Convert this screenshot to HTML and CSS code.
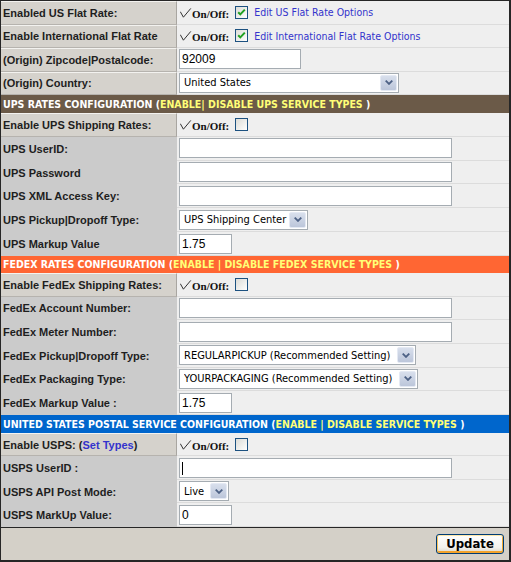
FILE: index.html
```html
<!DOCTYPE html>
<html>
<head>
<meta charset="utf-8">
<title>Shipping Configuration</title>
<link rel="stylesheet" href="styles.css">
</head>
<body>
<div class="panel">
  <div class="form">
    <div class="lbl raised">Enabled US Flat Rate:</div>
    <div class="val">
      <span class="tick"><svg width="12" height="10" viewBox="0 0 12 10"><polyline points="0.3,3.7 3.4,9.2 10.8,0.4" fill="none" stroke="#333" stroke-width="1"/></svg></span><span class="onoff">On/Off:</span>
      <span class="cb"><svg width="11" height="11" viewBox="0 0 11 11"><path d="M2.2 5.2 L4.3 7.4 L8.8 2.6" fill="none" stroke="#21a121" stroke-width="2"/></svg></span>
      <a class="link" href="#">Edit US Flat Rate Options</a>
    </div>

    <div class="lbl raised">Enable International Flat Rate</div>
    <div class="val">
      <span class="tick"><svg width="12" height="10" viewBox="0 0 12 10"><polyline points="0.3,3.7 3.4,9.2 10.8,0.4" fill="none" stroke="#333" stroke-width="1"/></svg></span><span class="onoff">On/Off:</span>
      <span class="cb"><svg width="11" height="11" viewBox="0 0 11 11"><path d="M2.2 5.2 L4.3 7.4 L8.8 2.6" fill="none" stroke="#21a121" stroke-width="2"/></svg></span>
      <a class="link" href="#">Edit International Flat Rate Options</a>
    </div>

    <div class="lbl raised">(Origin) Zipcode|Postalcode:</div>
    <div class="val"><input class="txt w-zip" type="text" value="92009"></div>

    <div class="lbl raised">(Origin) Country:</div>
    <div class="val">
      <span class="select w-country"><select><option>United States</option></select><span class="arrow"><svg width="8" height="5" viewBox="0 0 8 5"><path d="M0.7 0.6 L4 3.9 L7.3 0.6" fill="none" stroke="#4d6185" stroke-width="1.8"/></svg></span></span>
    </div>

    <div class="hdr ups">UPS RATES CONFIGURATION (<span class="opt">ENABLE| DISABLE UPS SERVICE TYPES</span>&nbsp;)</div>

    <div class="lbl raised">Enable UPS Shipping Rates:</div>
    <div class="val">
      <span class="tick"><svg width="12" height="10" viewBox="0 0 12 10"><polyline points="0.3,3.7 3.4,9.2 10.8,0.4" fill="none" stroke="#333" stroke-width="1"/></svg></span><span class="onoff">On/Off:</span>
      <span class="cb"></span>
    </div>

    <div class="lbl">UPS UserID:</div>
    <div class="val"><input class="txt w-long" type="text" value=""></div>

    <div class="lbl">UPS Password</div>
    <div class="val"><input class="txt w-long" type="text" value=""></div>

    <div class="lbl">UPS XML Access Key:</div>
    <div class="val"><input class="txt w-long" type="text" value=""></div>

    <div class="lbl">UPS Pickup|Dropoff Type:</div>
    <div class="val">
      <span class="select w-upspick"><select><option>UPS Shipping Center</option></select><span class="arrow"><svg width="8" height="5" viewBox="0 0 8 5"><path d="M0.7 0.6 L4 3.9 L7.3 0.6" fill="none" stroke="#4d6185" stroke-width="1.8"/></svg></span></span>
    </div>

    <div class="lbl">UPS Markup Value</div>
    <div class="val"><input class="txt w-short" type="text" value="1.75"></div>

    <div class="hdr fedex">FEDEX RATES CONFIGURATION (<span class="opt">ENABLE | DISABLE FEDEX SERVICE TYPES</span>&nbsp;)</div>

    <div class="lbl raised">Enable FedEx Shipping Rates:</div>
    <div class="val">
      <span class="tick"><svg width="12" height="10" viewBox="0 0 12 10"><polyline points="0.3,3.7 3.4,9.2 10.8,0.4" fill="none" stroke="#333" stroke-width="1"/></svg></span><span class="onoff">On/Off:</span>
      <span class="cb"></span>
    </div>

    <div class="lbl">FedEx Account Number:</div>
    <div class="val"><input class="txt w-long" type="text" value=""></div>

    <div class="lbl">FedEx Meter Number:</div>
    <div class="val"><input class="txt w-long" type="text" value=""></div>

    <div class="lbl">FedEx Pickup|Dropoff Type:</div>
    <div class="val">
      <span class="select w-fxpick"><select><option>REGULARPICKUP (Recommended Setting)</option></select><span class="arrow"><svg width="8" height="5" viewBox="0 0 8 5"><path d="M0.7 0.6 L4 3.9 L7.3 0.6" fill="none" stroke="#4d6185" stroke-width="1.8"/></svg></span></span>
    </div>

    <div class="lbl">FedEx Packaging Type:</div>
    <div class="val">
      <span class="select w-fxpack"><select><option>YOURPACKAGING (Recommended Setting)</option></select><span class="arrow"><svg width="8" height="5" viewBox="0 0 8 5"><path d="M0.7 0.6 L4 3.9 L7.3 0.6" fill="none" stroke="#4d6185" stroke-width="1.8"/></svg></span></span>
    </div>

    <div class="lbl">FedEx Markup Value :</div>
    <div class="val"><input class="txt w-short" type="text" value="1.75"></div>

    <div class="hdr usps">UNITED STATES POSTAL SERVICE CONFIGURATION (<span class="opt">ENABLE | DISABLE SERVICE TYPES</span>&nbsp;)</div>

    <div class="lbl raised">Enable USPS: (<a class="setlink" href="#">Set Types</a>)</div>
    <div class="val">
      <span class="tick"><svg width="12" height="10" viewBox="0 0 12 10"><polyline points="0.3,3.7 3.4,9.2 10.8,0.4" fill="none" stroke="#333" stroke-width="1"/></svg></span><span class="onoff">On/Off:</span>
      <span class="cb"></span>
    </div>

    <div class="lbl">USPS UserID :</div>
    <div class="val"><span class="focused"><input class="txt w-long" type="text" value=""></span></div>

    <div class="lbl">USPS API Post Mode:</div>
    <div class="val">
      <span class="select w-live"><select><option>Live</option></select><span class="arrow"><svg width="8" height="5" viewBox="0 0 8 5"><path d="M0.7 0.6 L4 3.9 L7.3 0.6" fill="none" stroke="#4d6185" stroke-width="1.8"/></svg></span></span>
    </div>

    <div class="lbl">USPS MarkUp Value:</div>
    <div class="val"><input class="txt w-short" type="text" value="0"></div>
  </div>
  <div class="footer">
    <button class="btn" type="button">Update</button>
  </div>
</div>
</body>
</html>
```

FILE: styles.css
```css
html, body {
  margin: 0;
  padding: 0;
  background: #ffffff;
}

.panel {
  width: 511px;
  height: 562px;
  box-sizing: border-box;
  border-top: 1px solid #262626;
  border-left: 1px solid #262626;
  border-right: 2px solid #262626;
  border-bottom: 2px solid #262626;
  background: #efefef;
  display: flex;
  flex-direction: column;
  font-family: "DejaVu Sans Condensed", "DejaVu Sans", sans-serif;
  font-stretch: condensed;
}

.form {
  display: grid;
  grid-template-columns: 176px 1fr;
  grid-template-rows:
    repeat(4, 23.5px)
    18px
    repeat(6, 23.833px)
    17px
    repeat(6, 23.667px)
    18px
    repeat(4, 23.5px);
}

.lbl {
  display: flex;
  align-items: center;
  box-sizing: border-box;
  padding-left: 2px;
  background: #cbcbcb;
  color: #1e1e1e;
  font-family: "Liberation Sans", Arial, sans-serif;
  font-stretch: normal;
  font-size: 11px;
  font-weight: bold;
  white-space: nowrap;
  overflow: hidden;
}

.lbl.raised {
  background: #d5d2cc;
  border-top: 1px solid #f3f2ef;
  border-right: 1px solid #a9a6a1;
  border-bottom: 1px solid #b6b3ae;
}

.setlink {
  color: #3333cc;
  text-decoration: none;
}

.val {
  display: flex;
  align-items: center;
  box-sizing: border-box;
  padding-left: 2px;
  background: #efefef;
  border-bottom: 1px solid #dcdcdc;
}

.hdr {
  grid-column: 1 / 3;
  display: flex;
  align-items: center;
  padding-left: 2px;
  color: #ffffff;
  font-size: 10.5px;
  font-weight: bold;
  white-space: nowrap;
}

.hdr.ups { background: #6b5a48; }
.hdr.fedex { background: #ff6633; }
.hdr.usps { background: #0066cc; }

.hdr .opt { color: #ffff77; }

.tick {
  display: inline-flex;
  width: 12px;
  height: 10px;
  margin-left: 1px;
  margin-top: 1px;
}

.onoff {
  font-family: "Liberation Serif", serif;
  font-stretch: normal;
  font-weight: bold;
  font-size: 11px;
  color: #111;
  margin-top: 3px;
  margin-right: 6px;
}

.cb {
  display: inline-flex;
  align-items: center;
  justify-content: center;
  box-sizing: border-box;
  width: 13px;
  height: 13px;
  border: 1px solid #1c5180;
  background: linear-gradient(135deg, #dcdcd7 0%, #f4f4f2 70%, #ffffff 100%);
  margin-right: 6px;
}

.link {
  color: #3333cc;
  text-decoration: none;
  font-size: 10.5px;
  font-family: "DejaVu Sans Condensed", "DejaVu Sans", sans-serif;
}

.txt {
  box-sizing: border-box;
  height: 20px;
  margin: 0;
  padding: 0 2px;
  border: 1px solid #a5acb2;
  border-radius: 0;
  background: #ffffff;
  color: #000;
  font-family: "Liberation Sans", Arial, sans-serif;
  font-size: 12px;
  outline: none;
}

.w-zip { width: 122px; }
.w-long { width: 273px; }
.w-short { width: 53px; }

.focused {
  position: relative;
  display: inline-flex;
}

.focused::after {
  content: "";
  position: absolute;
  left: 3px;
  top: 4px;
  width: 1px;
  height: 13px;
  background: #000;
}

.select {
  position: relative;
  display: inline-flex;
  height: 20px;
}

.select select {
  appearance: none;
  -webkit-appearance: none;
  box-sizing: border-box;
  width: 100%;
  height: 20px;
  margin: 0;
  padding: 0 0 0 4px;
  border: 1px solid #a5acb2;
  border-radius: 0;
  background: #ffffff;
  color: #000;
  font-family: "DejaVu Sans Condensed", "DejaVu Sans", sans-serif;
  font-stretch: condensed;
  font-size: 11px;
}

.arrow {
  position: absolute;
  right: 2px;
  top: 2px;
  box-sizing: border-box;
  width: 17px;
  height: 16px;
  border: 1px solid #e4e9f3;
  border-radius: 2px;
  background: linear-gradient(#d8dfec, #bcc6da);
  display: flex;
  align-items: center;
  justify-content: center;
}

.w-country { width: 220px; }
.w-upspick { width: 129px; }
.w-fxpick { width: 237px; }
.w-fxpack { width: 239px; }
.w-live { width: 50px; }

.footer {
  flex: 1;
  border-top: 1px solid #262626;
  background: #d4d0c8;
  display: flex;
  align-items: center;
  justify-content: flex-end;
  padding-right: 5px;
}

.btn {
  box-sizing: border-box;
  width: 68px;
  height: 20px;
  margin: 0;
  padding: 0;
  border: 1px solid #003c74;
  border-radius: 3px;
  background: linear-gradient(#ffffff, #f2f1ec 70%, #d9d4c8);
  box-shadow: inset 0 1px 0 #fde6a8, inset 1px 0 0 #f9c35b, inset -1px 0 0 #f5aa33, inset 0 -2px 0 #f2a22c;
  color: #000;
  font-family: "DejaVu Sans Condensed", "DejaVu Sans", sans-serif;
  font-stretch: condensed;
  font-size: 13px;
  font-weight: bold;
}
```
